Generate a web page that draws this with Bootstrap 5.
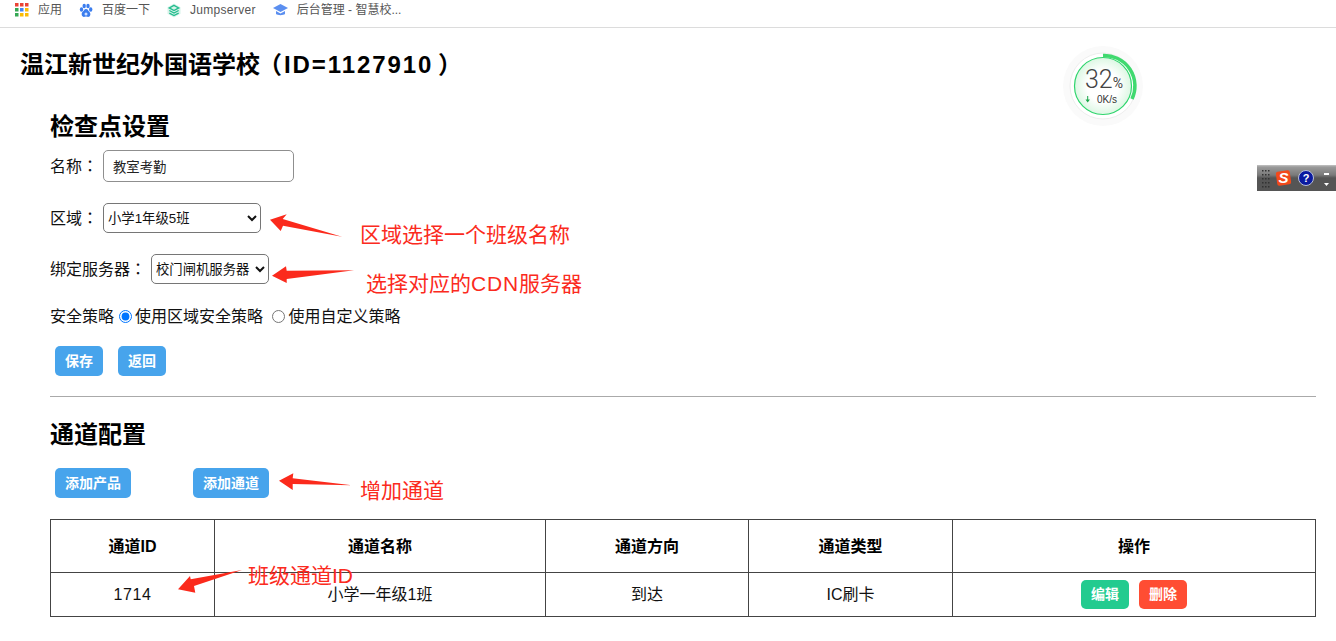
<!DOCTYPE html>
<html lang="zh-CN">
<head>
    <meta charset="UTF-8">
    <meta name="viewport" content="width=device-width, initial-scale=1.0">
    <title>检查点设置</title>
    <link rel="stylesheet" href="https://cdn.jsdelivr.net/npm/bootstrap@5.3.0/dist/css/bootstrap.min.css">
    <style>
        html, body {
            height: 641px;
            overflow: hidden;
        }
        body {
            position: relative;
            background: #fff;
            color: #111;
            font-family: "Liberation Sans", "Noto Sans CJK SC", sans-serif;
            font-size: 16px;
        }
        .bookmarks {
            height: 28px;
            padding: 0 0 7px 15px;
            border-bottom: 1px solid #dcdcdc;
            font-size: 12px;
            color: #555;
            gap: 17px;
        }
        .bookmarks span {
            gap: 9px;
        }
        .spaced-word {
            letter-spacing: .3px;
        }
        .tc-punct {
            font-family: "Noto Sans CJK TC", sans-serif;
        }
        .page-title {
            margin: 21px 0 0 20px;
            font-size: 24px;
            line-height: 28px;
            font-weight: 700;
            color: #000;
        }
        .page-title b {
            letter-spacing: 1.900px;
        }
        .paren-open, .paren-close {
            font-feature-settings: "palt";
        }
        .paren-open {
            margin: 0 3px 0 9px;
        }
        .paren-close {
            margin-left: 6px;
        }
        .page-body {
            margin: 0 20px 0 50px;
        }
        .sec-title {
            font-size: 24px;
            line-height: 28px;
            font-weight: 700;
            color: #000;
            margin: 34px 0 0;
        }
        .sec-title-2 {
            margin-top: 24px;
        }
        .form-line {
            line-height: 22px;
            margin-top: 21px;
        }
        .form-line label {
            margin-right: 5px;
        }
        .form-line-first {
            margin-top: 9px;
        }
        .policy-line {
            margin-top: 22px;
        }
        .name-input {
            width: 191px;
            height: 32px;
            border: 1px solid #8f8f8f;
            border-radius: 5px;
            padding: 0 9px;
            font-size: 13.330px;
            color: #222;
        }
        .plain-select {
            height: 30px;
            border: 1px solid #767676;
            border-radius: 5px;
            background: #fff;
            font-size: 13.330px;
            color: #111;
            padding: 0;
        }
        .sel-area { width: 158px; }
        .sel-server { width: 118px; }
        .policy-line input {
            margin: 0 3px 0 5px;
            vertical-align: -1px;
        }
        .btn-line {
            padding-left: 5px;
            margin-top: 18px;
        }
        .btn-line-2 {
            margin-top: 19px;
        }
        .blue-btn, .green-btn, .red-btn {
            border: 0;
            border-radius: 5px;
            color: #fff;
            font-size: 14px;
            font-weight: 700;
            height: 30px;
            padding: 0 10px;
        }
        .green-btn, .red-btn {
            height: 29px;
        }
        .blue-btn { background: #47a4ec; }
        .green-btn { background: #23cb8f; }
        .red-btn { background: #ff4d33; }
        .gap-save { margin-left: 15px; }
        .gap-add { margin-left: 62px; }
        .action-btns { gap: 10px; }
        .divider {
            margin: 20px 0 0;
            border: 0;
            border-top: 1px solid #aaa;
            opacity: 1;
        }
        .chan-table {
            width: 100%;
            table-layout: fixed;
            border-collapse: collapse;
            margin: 21px 0 0;
        }
        .chan-table th, .chan-table td {
            border: 1px solid #444;
            text-align: center;
            vertical-align: middle;
            color: #111;
            padding: 0;
        }
        .chan-table th {
            height: 53px;
            padding-top: 2px;
            font-size: 16px;
            color: #000;
        }
        .chan-table td {
            height: 44px;
            font-size: 16px;
        }
        .chan-id {
            letter-spacing: .6px;
        }
        .note {
            position: absolute;
            color: #fb2a20;
            font-size: 21px;
            line-height: 24px;
            white-space: nowrap;
        }
        .note-1 { left: 360px; top: 223px; }
        .note-2 { left: 366px; top: 272px; }
        .note-3 { left: 360px; top: 479px; }
        .note-4 { left: 248px; top: 564px; }
        .note-2 b {
            font-weight: 400;
            letter-spacing: .8px;
        }
        .arrow {
            position: absolute;
            left: 0;
            top: 0;
            pointer-events: none;
        }
        .speed-ball {
            position: absolute;
            left: 1062px;
            top: 46px;
        }
        .speed-pct {
            position: absolute;
            left: 1085px;
            top: 66px;
            font-size: 25px;
            line-height: 28px;
            font-weight: 300;
            color: #444;
            font-family: Roboto, "Liberation Sans", sans-serif;
        }
        .speed-pct i {
            font-style: normal;
            font-size: 14px;
            font-weight: 400;
        }
        .speed-rate {
            position: absolute;
            left: 1097px;
            top: 94px;
            font-size: 10px;
            line-height: 11px;
            color: #333;
        }
        .ime-bar {
            position: absolute;
            left: 1257px;
            top: 165px;
            width: 79px;
            height: 26px;
            background: linear-gradient(#c4c4c4 0, #9a9a9a 2px, #7a7a7a 10px, #555 13px, #555 100%);
        }
    </style>
</head>
<body>
    <div class="bookmarks d-flex align-items-center">
        <span class="d-flex align-items-center">
            <svg width="14" height="14" viewBox="0 0 14 14">
                <rect x="0" y="0" width="3.500" height="3.500" fill="#ea4335"/><rect x="5" y="0" width="3.500" height="3.500" fill="#ea4335"/><rect x="10" y="0" width="3.500" height="3.500" fill="#ea4335"/>
                <rect x="0" y="5" width="3.500" height="3.500" fill="#34a853"/><rect x="5" y="5" width="3.500" height="3.500" fill="#4285f4"/><rect x="10" y="5" width="3.500" height="3.500" fill="#fbbc05"/>
                <rect x="0" y="10" width="3.500" height="3.500" fill="#34a853"/><rect x="5" y="10" width="3.500" height="3.500" fill="#fbbc05"/><rect x="10" y="10" width="3.500" height="3.500" fill="#fbbc05"/>
            </svg>
            应用
        </span>
        <span class="d-flex align-items-center">
            <svg width="14" height="15" viewBox="0 0 14 14" fill="#3b7dee">
                <ellipse cx="2.500" cy="6" rx="1.700" ry="2.200"/><ellipse cx="5.200" cy="2.500" rx="1.700" ry="2.200"/><ellipse cx="9" cy="2.500" rx="1.700" ry="2.200"/><ellipse cx="11.700" cy="6" rx="1.700" ry="2.200"/>
                <path d="M7 5.500c-2 0-2 2-3.500 3S2.500 13.500 5 13.500c1 0 1.300-.4 2-.4s1 .4 2 .4c2.500 0 3-3.500 1.500-5S9 5.500 7 5.500z"/>
                <circle cx="7" cy="10.500" r="1.500" fill="#cfe0ff"/>
            </svg>
            百度一下
        </span>
        <span class="d-flex align-items-center">
            <svg width="14" height="15" viewBox="0 0 15 15">
                <path d="M7.500 0 14.500 4v7l-7 4-7-4V4z" fill="#d9f3ea"/>
                <path d="M7.500 2 12.500 4.800 7.500 7.500 2.500 4.800zM2.500 7.500l5 2.700 5-2.700M2.500 10.200l5 2.700 5-2.700" fill="none" stroke="#25bd8f" stroke-width="1.500"/>
            </svg>
            <span class="spaced-word">Jumpserver</span>
        </span>
        <span class="d-flex align-items-center">
            <svg width="15" height="14" viewBox="0 0 15 14" fill="#5b8ff0">
                <path d="M7.500 1 15 5l-7.500 4L0 5z"/><path d="M3 8v3c1.500 1.500 7.500 1.500 9 0V8l-4.500 2.500z"/>
            </svg>
            后台管理 - 智慧校...
        </span>
    </div>

    <h4 class="page-title">温江新世纪外国语学校<span class="tc-punct paren-open d-inline-block">（</span><b>ID=1127910</b><span class="tc-punct paren-close d-inline-block">）</span></h4>

    <div class="page-body">
        <h5 class="sec-title">检查点设置</h5>

        <div class="form-line form-line-first d-flex align-items-center">
            <label for="cp-name">名称<span class="tc-punct" lang="zh-TW">：</span></label>
            <input id="cp-name" class="name-input" type="text" value="教室考勤">
        </div>
        <div class="form-line d-flex align-items-center">
            <label for="cp-area">区域<span class="tc-punct" lang="zh-TW">：</span></label>
            <select id="cp-area" class="plain-select sel-area"><option>小学1年级5班</option></select>
        </div>
        <div class="form-line d-flex align-items-center">
            <label for="cp-server">绑定服务器<span class="tc-punct" lang="zh-TW">：</span></label>
            <select id="cp-server" class="plain-select sel-server"><option>校门闸机服务器</option></select>
        </div>
        <div class="form-line policy-line">
            安全策略<input type="radio" name="policy" checked>使用区域安全策略
            <input type="radio" name="policy">使用自定义策略
        </div>
        <div class="btn-line d-flex">
            <button class="blue-btn" type="button">保存</button>
            <button class="blue-btn gap-save" type="button">返回</button>
        </div>

        <hr class="divider">

        <h5 class="sec-title sec-title-2">通道配置</h5>
        <div class="btn-line btn-line-2 d-flex">
            <button class="blue-btn" type="button">添加产品</button>
            <button class="blue-btn gap-add" type="button">添加通道</button>
        </div>

        <table class="chan-table">
            <colgroup>
                <col style="width: 164px"><col style="width: 331px"><col style="width: 203px"><col style="width: 204px"><col>
            </colgroup>
            <thead>
                <tr><th>通道ID</th><th>通道名称</th><th>通道方向</th><th>通道类型</th><th>操作</th></tr>
            </thead>
            <tbody>
                <tr>
                    <td class="chan-id">1714</td>
                    <td>小学一年级1班</td>
                    <td>到达</td>
                    <td>IC刷卡</td>
                    <td>
                        <div class="action-btns d-flex justify-content-center">
                            <button class="green-btn" type="button">编辑</button>
                            <button class="red-btn" type="button">删除</button>
                        </div>
                    </td>
                </tr>
            </tbody>
        </table>
    </div>

    <!-- annotations drawn over the screenshot -->
    <svg class="arrow" width="1336" height="641" fill="#fb2a1c">
        <path d="M270 219.700 L286.700 214.300 L282.700 219 L342 236.700 L283 225.700 L280.700 231 Z"/>
        <path d="M272 275.700 L286 266.300 L286.700 270.700 L354 270.300 L286.700 279 L286.700 283 Z"/>
        <path d="M279 480.700 L293.300 473.300 L292.700 478.300 L352 485.300 L292.700 484 L292.700 490 Z"/>
        <path d="M178 589.300 L190 576 L190.700 579.300 L242 570 L194 586 L195.300 592.700 Z"/>
    </svg>
    <div class="note note-1">区域选择一个班级名称</div>
    <div class="note note-2">选择对应的<b>CDN</b>服务器</div>
    <div class="note note-3">增加通道</div>
    <div class="note note-4">班级通道ID</div>

    <!-- floating speed ball -->
    <svg class="speed-ball" width="84" height="84" viewBox="0 0 84 84">
        <defs>
            <radialGradient id="ballFill" cx="50%" cy="50%" r="50%">
                <stop offset="55%" stop-color="#fff"/>
                <stop offset="100%" stop-color="#dcf7e3"/>
            </radialGradient>
        </defs>
        <circle cx="41" cy="40" r="40" fill="#fafafa"/>
        <circle cx="41" cy="40" r="33" fill="#fff" stroke="#eee" stroke-width="1"/>
        <circle cx="41" cy="40" r="28.500" fill="url(#ballFill)" stroke="#2fd56d" stroke-width="1.200"/>
        <path d="M41 9.500 A30.500 30.500 0 0 1 70 53" fill="none" stroke="#40d96f" stroke-width="3.500"/>
        <path d="M25.700 50v5" stroke="#1aa74a" stroke-width="1"/>
        <path d="M23.500 53.500l2.200 3 2.200-3z" fill="#1aa74a"/>
    </svg>
    <div class="speed-pct">32<i>%</i></div>
    <div class="speed-rate">0K/s</div>

    <!-- floating IME toolbar -->
    <div class="ime-bar">
        <svg width="79" height="26" viewBox="0 0 79 26">
            <g fill="#333">
                <rect x="5" y="5" width="1.500" height="1.500"/><rect x="8" y="5" width="1.500" height="1.500"/><rect x="11" y="5" width="1.500" height="1.500"/>
                <rect x="5" y="9" width="1.500" height="1.500"/><rect x="8" y="9" width="1.500" height="1.500"/><rect x="11" y="9" width="1.500" height="1.500"/>
                <rect x="5" y="13" width="1.500" height="1.500"/><rect x="8" y="13" width="1.500" height="1.500"/><rect x="11" y="13" width="1.500" height="1.500"/>
                <rect x="5" y="17" width="1.500" height="1.500"/><rect x="8" y="17" width="1.500" height="1.500"/><rect x="11" y="17" width="1.500" height="1.500"/>
                <rect x="5" y="21" width="1.500" height="1.500"/><rect x="8" y="21" width="1.500" height="1.500"/><rect x="11" y="21" width="1.500" height="1.500"/>
            </g>
            <rect x="19.500" y="6" width="14" height="14" rx="2" fill="#f2491a" transform="rotate(-8 26.500 13)"/>
            <text x="26.500" y="18" text-anchor="middle" font-size="15" font-weight="700" font-style="italic" fill="#fff" font-family="Liberation Sans">S</text>
            <circle cx="49" cy="13" r="7.500" fill="#0a1aa0" stroke="#b9c0d8" stroke-width="1"/>
            <text x="49" y="17" text-anchor="middle" font-size="11" font-weight="700" fill="#fff" font-family="Liberation Sans">?</text>
            <rect x="67" y="8" width="5" height="2" fill="#fff"/>
            <path d="M67 18h5l-2.500 3z" fill="#fff"/>
        </svg>
    </div>
</body>
</html>
